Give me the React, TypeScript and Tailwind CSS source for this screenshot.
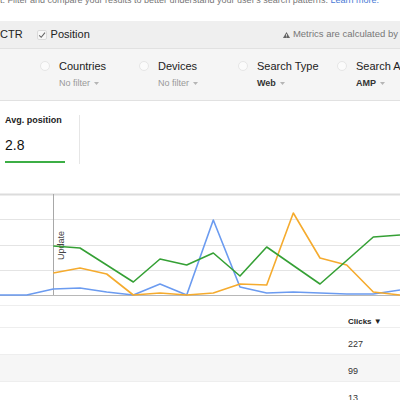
const W = 400
const step = W / 15
const top = 193

// y values in page pixels, null where the series has no point
const BLUE = [295, 295, 289, 288, 292, 295, 284, 295, 220, 287, 293, 292, 293, 294, 294, 290]
const ORANGE = [null, null, 273, 268, 274, 295, 293, 295, 293, 284, 285, 213, 258, 265, 292, 295]
const GREEN = [null, null, 246, 248, 265, 282, 259, 265, 253, 276, 247, 265.5, 284, 260.5, 237, 235]

function toPoints(values: (number | null)[]) {
  return values
    .map((v, i) => (v === null ? null : `${(i * step).toFixed(1)},${v - top}`))
    .filter(Boolean)
    .join(" ")
}

const FILTERS = [
  { label: "Countries", value: "No filter", bold: false },
  { label: "Devices", value: "No filter", bold: false },
  { label: "Search Type", value: "Web", bold: true },
  { label: "Search Appearance", value: "AMP", bold: true },
]

const ROWS = ["227", "99", "13"]

function Caret() {
  return (
    <svg width="5" height="3" viewBox="0 0 5 3" className="ml-[4px] shrink-0">
      <path d="M0 0h5L2.5 3z" fill="#b5b5b5" />
    </svg>
  )
}

function Chart() {
  return (
    <svg width="400" height="103" viewBox="0 0 400 103" className="block">
      <line x1="0" y1="1.5" x2="400" y2="1.5" stroke="#dcdcdc" strokeWidth="2" />
      {[26.5, 52.5, 77.5].map((y) => (
        <line key={y} x1="0" y1={y} x2="400" y2={y} stroke="#e4e4e4" strokeWidth="1" />
      ))}
      <line x1="0" y1="102.5" x2="400" y2="102.5" stroke="#b8b8b8" strokeWidth="1" />
      <line x1="53.5" y1="1" x2="53.5" y2="102" stroke="#a8a8a8" strokeWidth="1" />
      <text
        transform="translate(64 67) rotate(-90)"
        fontSize="9"
        fill="#444"
        fontFamily="'Liberation Sans', Arial, sans-serif"
      >
        Update
      </text>
      <polyline points={toPoints(BLUE)} fill="none" stroke="#6b9bf0" strokeWidth="1.6" strokeLinejoin="round" />
      <polyline points={toPoints(ORANGE)} fill="none" stroke="#f5ab2e" strokeWidth="1.6" strokeLinejoin="round" />
      <polyline points={toPoints(GREEN)} fill="none" stroke="#35a035" strokeWidth="1.6" strokeLinejoin="round" />
    </svg>
  )
}

export default function App() {
  return (
    <div className="w-[400px] h-[400px] overflow-hidden bg-white font-['Liberation_Sans',Arial,sans-serif] text-[#222]">
      {/* intro text, mostly scrolled off */}
      <div className="h-[6px] overflow-hidden">
        <p className="-mt-[4px] text-[9px] leading-[9px] text-[#777] whitespace-nowrap">
          t. Filter and compare your results to better understand your user's search patterns.{" "}
          <span className="text-[#4a7bd6]">Learn more.</span>
        </p>
      </div>

      {/* metric toggles */}
      <div className="mt-[15px] h-[28px] bg-[#efefef] border-b border-[#e1e1e1] flex items-center justify-between pr-[2px]">
        <div className="flex items-center text-[11px]">
          <span>CTR</span>
          <svg width="10" height="10" viewBox="0 0 10 10" className="ml-[14px]">
            <rect x="0.5" y="0.5" width="9" height="9" rx="1.5" fill="#f7f7f7" stroke="#dadada" />
            <path d="M2.2 5.3l2 2L8 2.6" fill="none" stroke="#666" strokeWidth="1.1" />
          </svg>
          <span className="ml-[4px]">Position</span>
        </div>
        <div className="flex items-center text-[9.5px] text-[#777] whitespace-nowrap">
          <svg width="7" height="6" viewBox="0 0 7 6" className="mr-[3px]">
            <path d="M3.5 0L7 6H0z" fill="#666" />
            <rect x="3.1" y="2" width="0.8" height="2" fill="#efefef" />
            <rect x="3.1" y="4.5" width="0.8" height="0.8" fill="#efefef" />
          </svg>
          Metrics are calculated by
        </div>
      </div>

      {/* filters */}
      <div className="h-[52px] bg-[#f5f5f5] border-b border-[#e1e1e1] flex pl-[40px] pt-[11px] overflow-hidden">
        {FILTERS.map((f) => (
          <div key={f.label} className="w-[99px] shrink-0 flex items-start gap-[9px]">
            <span className="mt-[1px] w-[10px] h-[10px] rounded-full bg-[#fbfbfb] border border-[#e6e6e6] shrink-0" />
            <div className="whitespace-nowrap">
              <div className="text-[11px] leading-[13px] text-[#222]">{f.label}</div>
              <div
                className={
                  f.bold
                    ? "mt-[5px] flex items-center text-[9px] leading-[11px] font-bold text-[#333]"
                    : "mt-[5px] flex items-center text-[9px] leading-[11px] text-[#999]"
                }
              >
                {f.value}
                <Caret />
              </div>
            </div>
          </div>
        ))}
      </div>

      {/* scorecard */}
      <div className="pt-[14px] pb-[29px] flex">
        <div className="w-[80px] h-[49px] border-r border-[#e6e6e6] pl-[5px]">
          <div className="text-[9px] leading-[11px] font-bold text-[#222]">Avg. position</div>
          <div className="mt-[11px] text-[14px] leading-[17px] text-[#111]">2.8</div>
          <div className="mt-[7px] w-[60px] h-[2px] bg-[#3cae45]" />
        </div>
      </div>

      <Chart />

      {/* table */}
      <div className="mt-[9px] border-t border-[#eeeeee]">
        <div className="h-[22px] flex border-b border-[#eeeeee]">
          <div className="flex-1" />
          <div className="w-[52px] pt-[11px] text-[8px] leading-[9px] font-bold text-[#222]">Clicks ▼</div>
        </div>
        {ROWS.map((r, i) => (
          <div
            key={r}
            className={
              i === 1
                ? "h-[27px] flex border-b border-[#eeeeee] bg-[#f6f6f6]"
                : "h-[27px] flex border-b border-[#eeeeee]"
            }
          >
            <div className="flex-1" />
            <div className="w-[52px] pt-[11px] text-[9px] leading-[11px] text-[#333]">{r}</div>
          </div>
        ))}
      </div>
    </div>
  )
}
